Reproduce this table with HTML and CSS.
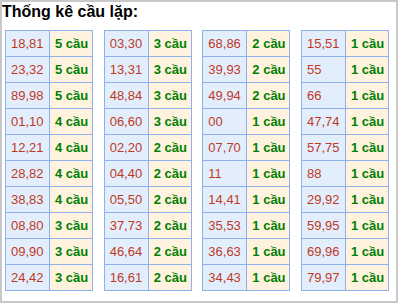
FILE: index.html
```html
<!DOCTYPE html>
<html lang="vi">
<head>
<meta charset="utf-8">
<link rel="stylesheet" href="styles.css">
</head>
<body>
<div class="box">
  <div class="title">Thống kê cầu lặp:</div>
  <div class="tables">
    <table class="tk">
      <tr><td class="num">18,81</td><td class="cnt">5 cầu</td></tr>
      <tr><td class="num">23,32</td><td class="cnt">5 cầu</td></tr>
      <tr><td class="num">89,98</td><td class="cnt">5 cầu</td></tr>
      <tr><td class="num">01,10</td><td class="cnt">4 cầu</td></tr>
      <tr><td class="num">12,21</td><td class="cnt">4 cầu</td></tr>
      <tr><td class="num">28,82</td><td class="cnt">4 cầu</td></tr>
      <tr><td class="num">38,83</td><td class="cnt">4 cầu</td></tr>
      <tr><td class="num">08,80</td><td class="cnt">3 cầu</td></tr>
      <tr><td class="num">09,90</td><td class="cnt">3 cầu</td></tr>
      <tr><td class="num">24,42</td><td class="cnt">3 cầu</td></tr>
    </table>
    <table class="tk">
      <tr><td class="num">03,30</td><td class="cnt">3 cầu</td></tr>
      <tr><td class="num">13,31</td><td class="cnt">3 cầu</td></tr>
      <tr><td class="num">48,84</td><td class="cnt">3 cầu</td></tr>
      <tr><td class="num">06,60</td><td class="cnt">3 cầu</td></tr>
      <tr><td class="num">02,20</td><td class="cnt">2 cầu</td></tr>
      <tr><td class="num">04,40</td><td class="cnt">2 cầu</td></tr>
      <tr><td class="num">05,50</td><td class="cnt">2 cầu</td></tr>
      <tr><td class="num">37,73</td><td class="cnt">2 cầu</td></tr>
      <tr><td class="num">46,64</td><td class="cnt">2 cầu</td></tr>
      <tr><td class="num">16,61</td><td class="cnt">2 cầu</td></tr>
    </table>
    <table class="tk">
      <tr><td class="num">68,86</td><td class="cnt">2 cầu</td></tr>
      <tr><td class="num">39,93</td><td class="cnt">2 cầu</td></tr>
      <tr><td class="num">49,94</td><td class="cnt">2 cầu</td></tr>
      <tr><td class="num">00</td><td class="cnt">1 cầu</td></tr>
      <tr><td class="num">07,70</td><td class="cnt">1 cầu</td></tr>
      <tr><td class="num">11</td><td class="cnt">1 cầu</td></tr>
      <tr><td class="num">14,41</td><td class="cnt">1 cầu</td></tr>
      <tr><td class="num">35,53</td><td class="cnt">1 cầu</td></tr>
      <tr><td class="num">36,63</td><td class="cnt">1 cầu</td></tr>
      <tr><td class="num">34,43</td><td class="cnt">1 cầu</td></tr>
    </table>
    <table class="tk">
      <tr><td class="num">15,51</td><td class="cnt">1 cầu</td></tr>
      <tr><td class="num">55</td><td class="cnt">1 cầu</td></tr>
      <tr><td class="num">66</td><td class="cnt">1 cầu</td></tr>
      <tr><td class="num">47,74</td><td class="cnt">1 cầu</td></tr>
      <tr><td class="num">57,75</td><td class="cnt">1 cầu</td></tr>
      <tr><td class="num">88</td><td class="cnt">1 cầu</td></tr>
      <tr><td class="num">29,92</td><td class="cnt">1 cầu</td></tr>
      <tr><td class="num">59,95</td><td class="cnt">1 cầu</td></tr>
      <tr><td class="num">69,96</td><td class="cnt">1 cầu</td></tr>
      <tr><td class="num">79,97</td><td class="cnt">1 cầu</td></tr>
    </table>
  </div>
</div>
</body>
</html>
```

FILE: styles.css
```css
html, body {
  margin: 0;
  padding: 0;
  background: #fff;
}
body {
  font-family: "Liberation Sans", Arial, sans-serif;
}
.box {
  box-sizing: border-box;
  width: 398px;
  height: 303px;
  border: 2px solid #c8c8c8;
}
.title {
  font-size: 16px;
  font-weight: bold;
  line-height: 20px;
  color: #000;
  margin-bottom: 8px;
}
.tables {
  display: flex;
  padding-left: 3px;
  column-gap: 10.67px;
}
.tk {
  border-collapse: collapse;
  width: 88px;
  table-layout: fixed;
}
.tk td {
  border: 1px solid #8eb1ec;
  font-size: 13px;
  line-height: 25px;
  padding: 0 0 0 5px;
  white-space: nowrap;
  vertical-align: middle;
}
.tk .num {
  width: 38px;
  background: #e3eefd;
  color: #c0391f;
}
.tk .cnt {
  background: #fff3e0;
  color: #008000;
  font-weight: bold;
}
```
